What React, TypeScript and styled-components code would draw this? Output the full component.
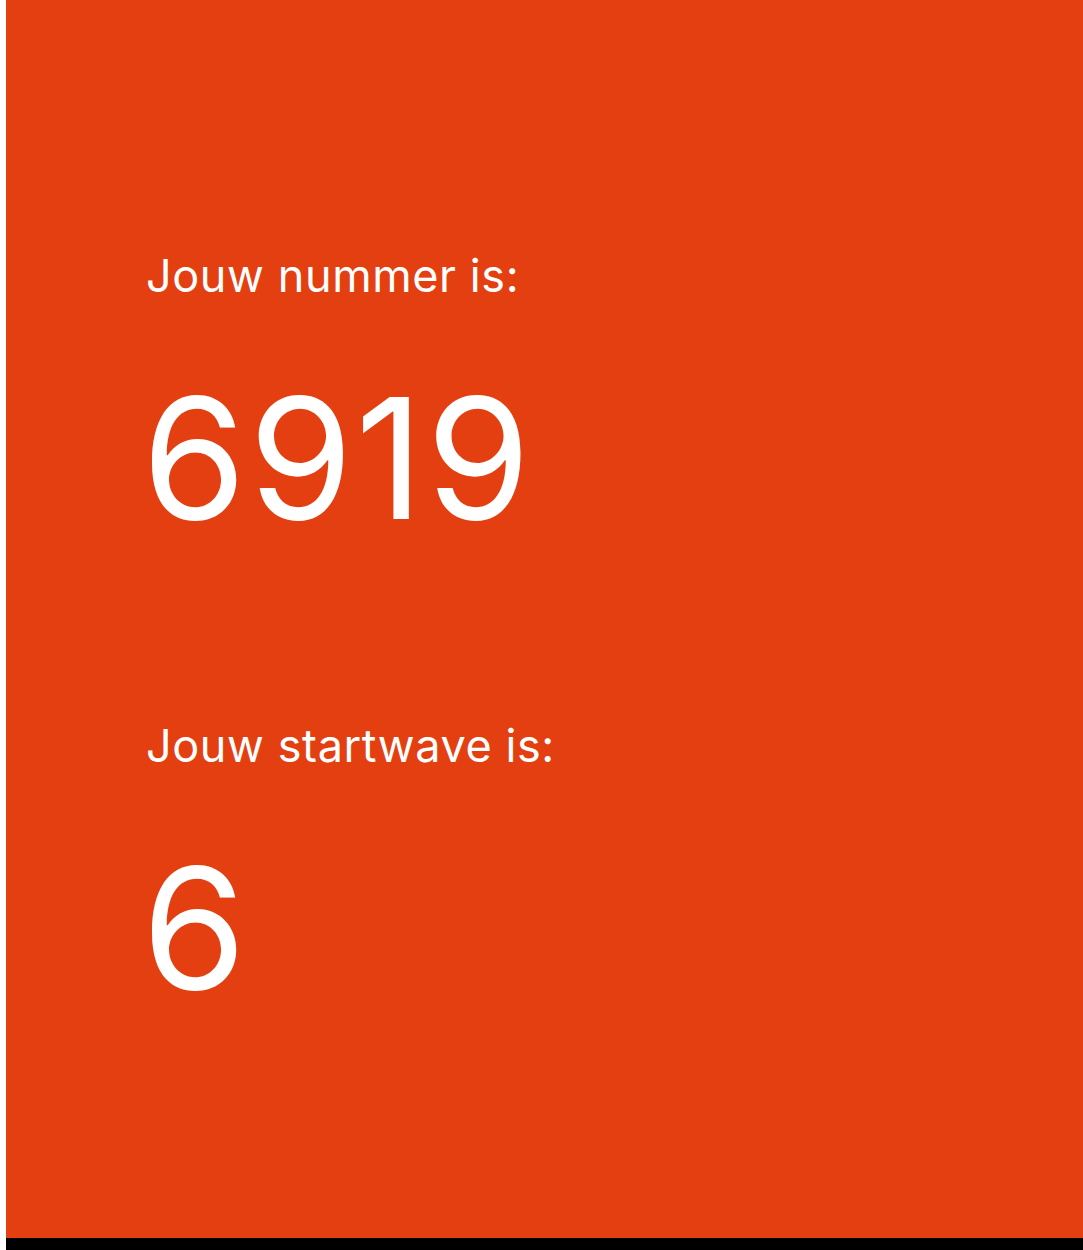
import React from 'react';
import styled, { createGlobalStyle } from 'styled-components';

const GlobalStyle = createGlobalStyle`
  html, body {
    margin: 0;
    padding: 0;
    background: #ffffff;
  }
  body {
    font-family: Inter, "Noto Sans", "Liberation Sans", sans-serif;
  }
`;

const Screen = styled.div`
  width: 1083px;
  height: 1250px;
  padding-left: 6px;
  box-sizing: border-box;
  display: flex;
  flex-direction: column;
`;

const Panel = styled.main`
  flex: 1;
  background: #e43f11;
  color: #ffffff;
  padding: 246px 0 0 140px;
  display: flex;
  flex-direction: column;
`;

const BottomBar = styled.div`
  height: 12px;
  background: #000000;
`;

const Label = styled.div`
  font-size: 45px;
  font-weight: 400;
  line-height: 60px;
  letter-spacing: 0.6px;
`;

const Value = styled.div`
  font-size: 168px;
  font-weight: 400;
  line-height: 200px;
  letter-spacing: 2.5px;
  margin: 52px 0 158px -4px;
`;

const Entry = ({ label, value }: { label: string; value: string }) => (
  <>
    <Label>{label}</Label>
    <Value>{value}</Value>
  </>
);

export default function App() {
  return (
    <>
      <GlobalStyle />
      <Screen>
        <Panel>
          <Entry label="Jouw nummer is:" value="6919" />
          <Entry label="Jouw startwave is:" value="6" />
        </Panel>
        <BottomBar />
      </Screen>
    </>
  );
}
